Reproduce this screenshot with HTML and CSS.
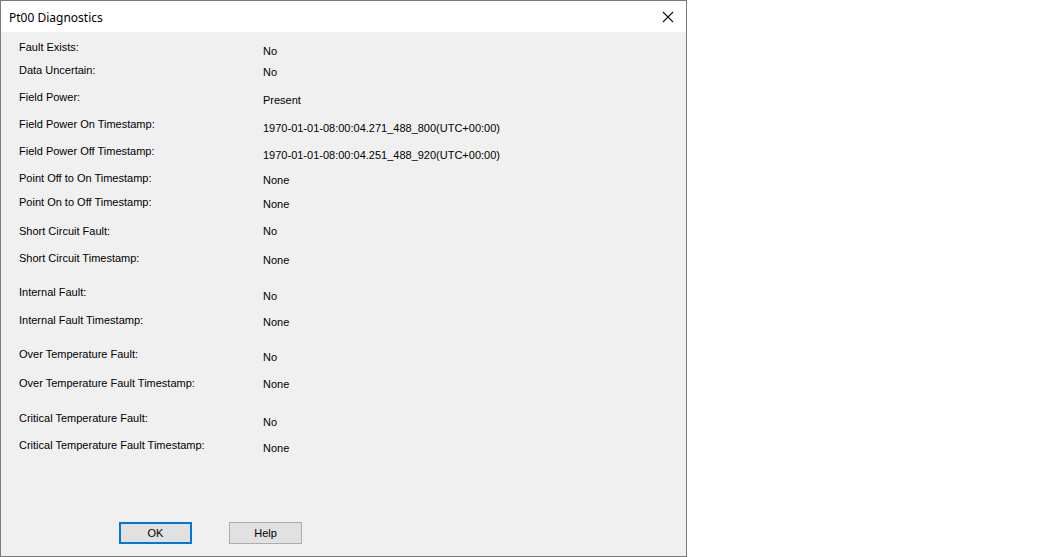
FILE: index.html
```html
<!DOCTYPE html>
<html lang="en">
<head>
  <meta charset="UTF-8" />
  <title>Pt00 Diagnostics</title>
  <link rel="stylesheet" href="styles.css">
</head>
<body>
  <div class="dialog">
    <div class="titlebar">
      <span class="title">Pt00 Diagnostics</span>
      <span class="close">
        <svg width="12" height="12" viewBox="0 0 12 12">
          <path d="M1 1 L11 11 M11 1 L1 11" stroke="#111" stroke-width="1.1" fill="none" />
        </svg>
      </span>
    </div>

    <div class="content">
      <div class="rows">
        <div class="row"><span class="label">Fault Exists:</span><span class="value">No</span></div>
        <div class="row"><span class="label">Data Uncertain:</span><span class="value">No</span></div>
        <div class="row"><span class="label">Field Power:</span><span class="value">Present</span></div>
        <div class="row"><span class="label">Field Power On Timestamp:</span><span class="value">1970-01-01-08:00:04.271_488_800(UTC+00:00)</span></div>
        <div class="row"><span class="label">Field Power Off Timestamp:</span><span class="value">1970-01-01-08:00:04.251_488_920(UTC+00:00)</span></div>
        <div class="row"><span class="label">Point Off to On Timestamp:</span><span class="value">None</span></div>
        <div class="row"><span class="label">Point On to Off Timestamp:</span><span class="value">None</span></div>
        <div class="row"><span class="label">Short Circuit Fault:</span><span class="value">No</span></div>
        <div class="row"><span class="label">Short Circuit Timestamp:</span><span class="value">None</span></div>
        <div class="row"><span class="label">Internal Fault:</span><span class="value">No</span></div>
        <div class="row"><span class="label">Internal Fault Timestamp:</span><span class="value">None</span></div>
        <div class="row"><span class="label">Over Temperature Fault:</span><span class="value">No</span></div>
        <div class="row"><span class="label">Over Temperature Fault Timestamp:</span><span class="value">None</span></div>
        <div class="row"><span class="label">Critical Temperature Fault:</span><span class="value">No</span></div>
        <div class="row"><span class="label">Critical Temperature Fault Timestamp:</span><span class="value">None</span></div>
      </div>

      <div class="buttons">
        <button class="btn btn-default">OK</button>
        <button class="btn">Help</button>
      </div>
    </div>
  </div>
</body>
</html>
```

FILE: styles.css
```css
body {
  margin: 0;
  background-color: #ffffff;
  font-family: 'Liberation Sans', Arial, sans-serif;
}
.dialog {
  width: 685px;
  height: 555px;
  border: 1px solid #7a7a7a;
  background-color: #f0f0f0;
  display: flex;
  flex-direction: column;
}
.titlebar {
  height: 31px;
  background-color: #ffffff;
  display: flex;
  align-items: center;
  justify-content: space-between;
  padding: 0 12px 0 8px;
}
.title {
  font-family: 'Noto Sans', 'Open Sans', sans-serif;
  font-size: 12px;
  color: #000;
  margin-top: 1px;
}
.close {
  display: flex;
}
.content {
  flex: 1;
  display: flex;
  flex-direction: column;
  padding: 9px 18px 0;
}
.rows {
  flex: 1;
}
.row {
  display: flex;
  font-size: 11px;
  line-height: 13px;
  color: #000;
}
.label {
  width: 244px;
}
.value {
  padding-top: 4px;
}
.row:nth-child(1) { height: 23px; }
.row:nth-child(2) { height: 27px; }
.row:nth-child(2) .value { padding-top: 2px; }
.row:nth-child(3) { height: 27px; }
.row:nth-child(3) .value { padding-top: 3px; }
.row:nth-child(4) { height: 27px; }
.row:nth-child(5) { height: 27px; }
.row:nth-child(6) { height: 24px; }
.row:nth-child(6) .value { padding-top: 2px; }
.row:nth-child(7) { height: 29px; }
.row:nth-child(7) .value { padding-top: 2px; }
.row:nth-child(8) { height: 27px; }
.row:nth-child(8) .value { padding-top: 0; }
.row:nth-child(9) { height: 34px; }
.row:nth-child(9) .value { padding-top: 2px; }
.row:nth-child(10) { height: 28px; }
.row:nth-child(11) { height: 34px; }
.row:nth-child(11) .value { padding-top: 2px; }
.row:nth-child(12) { height: 29px; }
.row:nth-child(12) .value { padding-top: 3px; }
.row:nth-child(13) { height: 35px; }
.row:nth-child(13) .value { padding-top: 1px; }
.row:nth-child(14) { height: 27px; }
.row:nth-child(15) .value { padding-top: 3px; }
.buttons {
  display: flex;
  gap: 37px;
  padding-left: 100px;
  margin-bottom: 12px;
}
.btn {
  width: 73px;
  height: 22px;
  font-family: 'Liberation Sans', Arial, sans-serif;
  font-size: 11px;
  color: #000;
  background-color: #e1e1e1;
  border: 1px solid #adadad;
  padding: 0;
}
.btn-default {
  border: 2px solid #0078d7;
}
```
